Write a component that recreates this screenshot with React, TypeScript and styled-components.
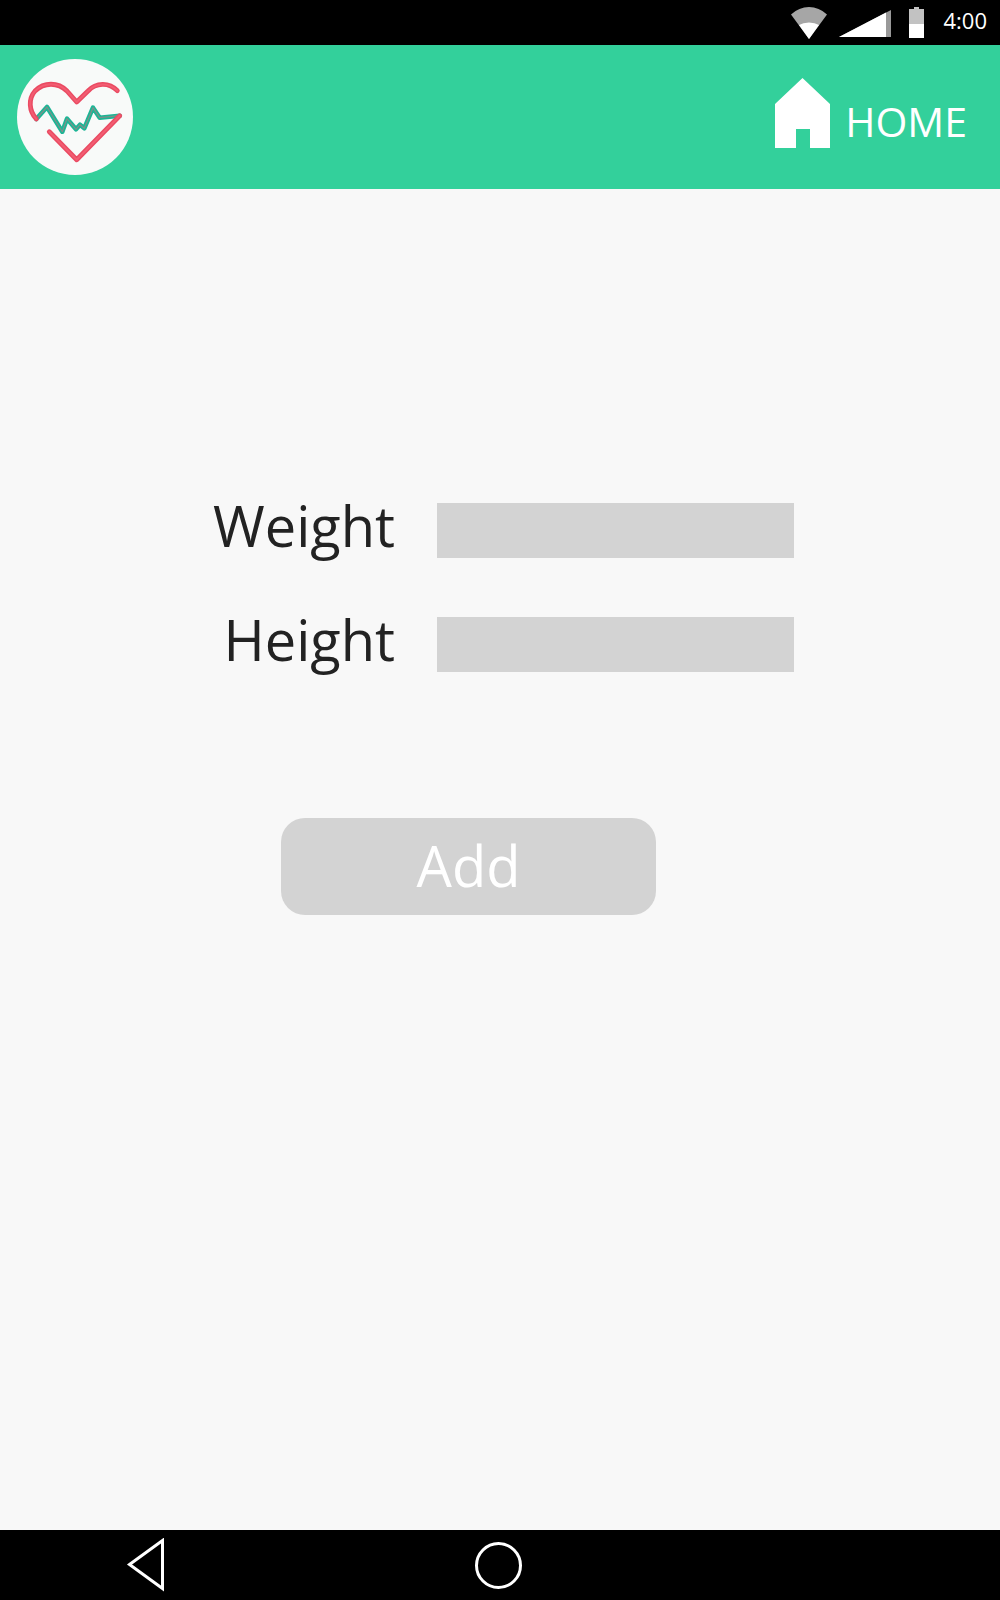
import React from "react";
import styled, { createGlobalStyle } from "styled-components";

const GlobalStyle = createGlobalStyle`
  *, *::before, *::after { box-sizing: border-box; }
  body {
    margin: 0;
    background: #f8f8f8;
    color: #222;
    font-family: "Open Sans", "Noto Sans", sans-serif;
  }
  svg { display: block; flex: none; }
`;

const Screen = styled.div`
  display: flex;
  flex-direction: column;
  min-height: 100vh;
`;

const StatusBar = styled.div`
  display: flex;
  align-items: center;
  justify-content: flex-end;
  height: 45px;
  padding: 0 13px;
  background: #000;
  color: #fff;
`;

const StatusIcons = styled.div`
  display: flex;
  align-items: center;
  gap: 12px;

  svg:last-child { margin-left: 6px; }
`;

const Clock = styled.time`
  margin-left: 19px;
  font-size: 22px;
  line-height: 30px;
  padding-bottom: 5px;
`;

const Header = styled.header`
  display: flex;
  align-items: center;
  justify-content: space-between;
  height: 144px;
  padding: 0 33px 0 17px;
  background: #33d09b;
`;

const HomeLink = styled.a`
  display: flex;
  align-items: flex-end;
  gap: 15px;
  padding-bottom: 8px;
  color: #fff;
  font-size: 41px;
  line-height: 54px;
  text-decoration: none;
`;

const Main = styled.main`
  display: flex;
  flex: 1;
  flex-direction: column;
  align-items: center;
  padding: 314px 16px 64px;
`;

const Form = styled.form`
  width: 100%;
  max-width: 588px;
`;

const Field = styled.div`
  display: flex;
  align-items: flex-start;
  justify-content: flex-end;
  gap: 42px;

  & + & { margin-top: 59px; }
`;

const Label = styled.label`
  font-size: 56px;
  line-height: 45px;
`;

const Input = styled.input`
  width: 357px;
  min-width: 0;
  height: 55px;
  padding: 0 12px;
  border: 0;
  border-radius: 0;
  background: #d3d3d3;
  color: #222;
  font: inherit;
  font-size: 32px;
`;

const AddButton = styled.button`
  display: block;
  width: 375px;
  max-width: 100%;
  height: 97px;
  margin: 146px 0 0 75px;
  padding: 0 0 4px;
  border: 0;
  border-radius: 24px;
  background: #d3d3d3;
  color: #fff;
  font: inherit;
  font-size: 56px;
  cursor: pointer;
`;

const NavBar = styled.nav`
  display: grid;
  grid-template-columns: 1fr auto 1fr;
  align-items: center;
  height: 70px;
  padding: 0 130px 0 126px;
  background: #000;
`;

const NavButton = styled.button`
  justify-self: start;
  padding: 0;
  border: 0;
  background: none;
  color: #fff;
  cursor: pointer;
`;

function WifiIcon() {
  return (
    <svg width="36" height="32" viewBox="0 0 36 32" aria-hidden="true">
      <path d="M18 32 0 7.5Q8 0 18 0t18 7.5Z" fill="#a6a6a6" />
      <path d="M18 32 8 18q4-2.5 10-2.5T28 18Z" fill="#fff" />
    </svg>
  );
}

function SignalIcon() {
  return (
    <svg width="52" height="29" viewBox="0 -2 52 29" aria-hidden="true">
      <path d="M0 27 52 0v27Z" fill="#999" />
      <path d="M0 27 47 2.6V27Z" fill="#fff" />
    </svg>
  );
}

function BatteryIcon() {
  return (
    <svg width="15" height="31" viewBox="0 0 15 31" aria-hidden="true">
      <path d="M0 2h5V0h5v2h5v15H0Z" fill="#c2c2c2" />
      <path d="M0 17h15v14H0Z" fill="#fff" />
    </svg>
  );
}

const heartTop =
  "M19.3 60C12 52 11 40 18 32C27 23 41 23 50 32L59.7 43L71 32C79 23.5 92 23 100.3 31.7";
const heartBottom = "M32.3 72.7 59.7 100.7 102.7 56.7";
const pulse =
  "M19.3 60 30 48 45.3 72.7 50 59.7 59 70.3 63 65.7 67.3 69.3 76 48.7 82.7 58.7 102.7 56.7";

function Logo() {
  return (
    <svg width="116" height="116" viewBox="0 0 116 116" role="img" aria-label="Heart rate">
      <circle cx="58" cy="58" r="58" fill="#f8faf9" />
      <g fill="none" strokeLinecap="round" strokeLinejoin="round">
        <path d={pulse} stroke="#1cb596" strokeWidth="4.6" />
        <path d={pulse} stroke="#7d9189" strokeWidth="1.2" />
        <path d={heartTop} stroke="#ea4a62" strokeWidth="4.8" />
        <path d={heartBottom} stroke="#ea4a62" strokeWidth="4.8" />
        <path d={heartTop} stroke="#f25d72" strokeWidth="2" />
        <path d={heartBottom} stroke="#f25d72" strokeWidth="2" />
      </g>
    </svg>
  );
}

function HouseIcon() {
  return (
    <svg width="55" height="70" viewBox="0 0 55 70" aria-hidden="true">
      <path d="M27.5 0 55 26v44H35V51H21v19H0V26Z" fill="#fff" />
    </svg>
  );
}

export default function App() {
  return (
    <Screen>
      <GlobalStyle />
      <StatusBar>
        <StatusIcons>
          <WifiIcon />
          <SignalIcon />
          <BatteryIcon />
        </StatusIcons>
        <Clock>4:00</Clock>
      </StatusBar>
      <Header>
        <Logo />
        <HomeLink href="#home">
          <HouseIcon />
          HOME
        </HomeLink>
      </Header>
      <Main>
        <Form onSubmit={(event) => event.preventDefault()}>
          <Field>
            <Label htmlFor="weight">Weight</Label>
            <Input id="weight" type="text" inputMode="decimal" />
          </Field>
          <Field>
            <Label htmlFor="height">Height</Label>
            <Input id="height" type="text" inputMode="decimal" />
          </Field>
          <AddButton type="submit">Add</AddButton>
        </Form>
      </Main>
      <NavBar>
        <NavButton type="button" aria-label="Back">
          <svg width="38" height="54" viewBox="0 0 38 54" aria-hidden="true">
            <path d="M3.5 26.5 36.5 2.5v48Z" fill="none" stroke="currentColor" strokeWidth="3" />
          </svg>
        </NavButton>
        <NavButton type="button" aria-label="Home screen">
          <svg width="47" height="47" viewBox="0 0 47 47" aria-hidden="true">
            <circle cx="23.5" cy="23.5" r="22" fill="none" stroke="currentColor" strokeWidth="3" />
          </svg>
        </NavButton>
      </NavBar>
    </Screen>
  );
}
